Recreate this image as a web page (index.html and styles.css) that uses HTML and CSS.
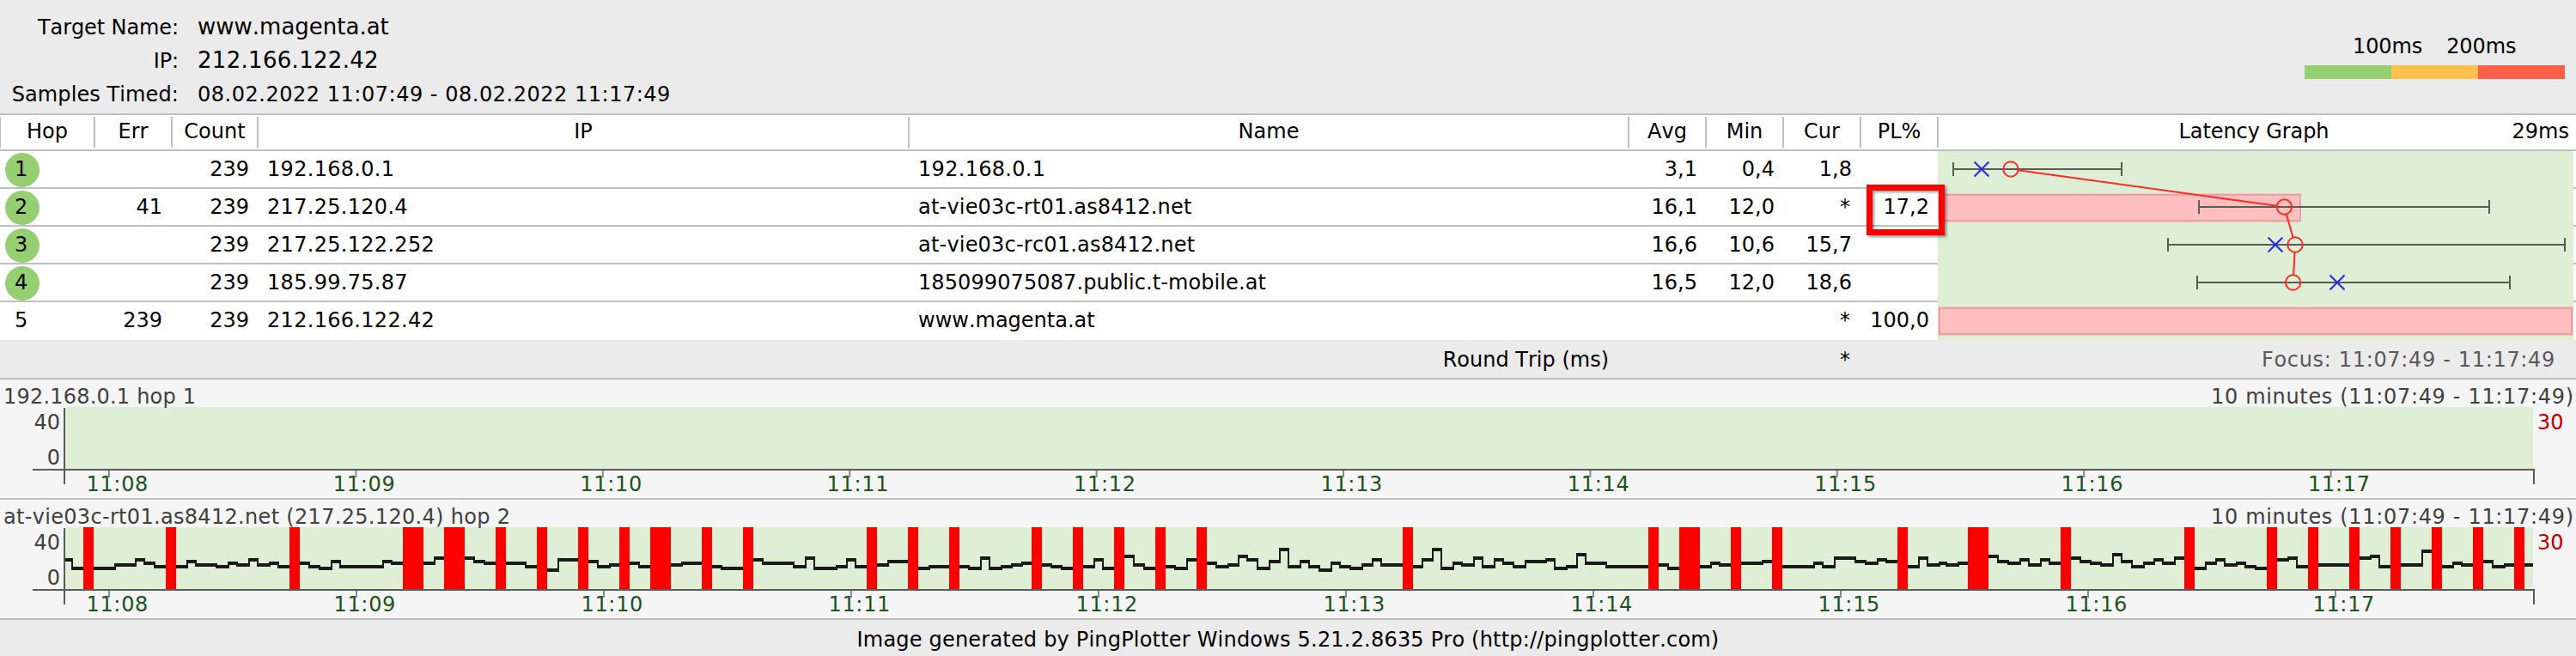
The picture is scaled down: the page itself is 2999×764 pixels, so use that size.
FILE: index.html
```html
<!DOCTYPE html>
<html lang="en">
<head>
<meta charset="utf-8">
<title>PingPlotter - www.magenta.at</title>
<link rel="stylesheet" href="styles.css">
</head>
<body>
<header class="summary">
  <dl class="info">
    <dt>Target Name:</dt><dd class="big">www.magenta.at</dd>
    <dt>IP:</dt><dd class="big ip">212.166.122.42</dd>
    <dt class="samples">Samples Timed:</dt><dd class="span">08.02.2022 11:07:49 - 08.02.2022 11:17:49</dd>
  </dl>
  <div class="legend">
    <div class="legend-labels"><span>100ms</span><span>200ms</span></div>
    <div class="legend-bar"><i class="good"></i><i class="warn"></i><i class="bad"></i></div>
  </div>
</header>

<main class="trace">
  <div class="row head">
    <span>Hop</span><span>Err</span><span>Count</span><span>IP</span><span>Name</span><span>Avg</span><span>Min</span><span>Cur</span><span>PL%</span>
    <span class="graph-head"><b>Latency Graph</b><em>29ms</em></span>
  </div>
  <div class="row"><span class="hop ok">1</span><span></span><span>239</span><span class="ip">192.168.0.1</span><span class="ip">192.168.0.1</span><span>3,1</span><span>0,4</span><span>1,8</span><span></span></div>
  <div class="row"><span class="hop ok">2</span><span>41</span><span>239</span><span class="ip">217.25.120.4</span><span class="host">at-vie03c-rt01.as8412.net</span><span>16,1</span><span>12,0</span><span class="star">*</span><span>17,2</span></div>
  <div class="row"><span class="hop ok">3</span><span></span><span>239</span><span class="ip">217.25.122.252</span><span class="host">at-vie03c-rc01.as8412.net</span><span>16,6</span><span>10,6</span><span>15,7</span><span></span></div>
  <div class="row"><span class="hop ok">4</span><span></span><span>239</span><span class="ip">185.99.75.87</span><span class="host-long">185099075087.public.t-mobile.at</span><span>16,5</span><span>12,0</span><span>18,6</span><span></span></div>
  <div class="row last"><span class="hop">5</span><span>239</span><span>239</span><span class="ip">212.166.122.42</span><span>www.magenta.at</span><span></span><span></span><span class="star">*</span><span>100,0</span></div>

  <svg class="latency" width="740" height="220" viewBox="2256 176 740 220">
    <rect class="plot" x="2256" y="176" width="740" height="220"/>
    <g class="loss">
      <rect x="2256" y="225" width="423" height="34"/><rect class="edge" x="2258" y="227" width="420" height="30"/>
      <rect x="2256" y="357" width="740" height="34"/><rect class="edge" x="2258" y="359" width="736" height="30"/>
    </g>
    <g class="whisker">
      <path d="M2274 197H2470M2274 189V205M2470 189V205"/>
      <path d="M2560 241H2898M2560 233V249M2898 233V249"/>
      <path d="M2524 285H2986M2524 277V293M2986 277V293"/>
      <path d="M2558 329H2922M2558 321V337M2922 321V337"/>
    </g>
    <g class="current">
      <path d="M2298.5 188.5l17 17m0-17l-17 17"/>
      <path d="M2640.5 276.5l17 17m0-17l-17 17"/>
      <path d="M2712.5 320.5l17 17m0-17l-17 17"/>
    </g>
    <g class="average">
      <circle cx="2341" cy="197" r="8.7"/><circle cx="2659.4" cy="241" r="8.7"/><circle cx="2672" cy="285" r="8.7"/><circle cx="2669.6" cy="329" r="8.7"/>
      <path d="M2349.6 198.2L2650.8 239.8M2661.8 249.4L2669.6 276.6M2671.5 293.7L2670.1 320.3"/>
    </g>
  </svg>
  <div class="highlight"></div>
</main>

<div class="round-trip"><span class="rt-label">Round Trip (ms)</span><span class="rt-value">*</span><span class="focus">Focus: 11:07:49 - 11:17:49</span></div>

<svg class="timeline" data-title="192.168.0.1 hop 1" data-step="287.4" data-title-width="224" width="2999" height="140"></svg>
<svg class="timeline" data-title="at-vie03c-rt01.as8412.net (217.25.120.4) hop 2" data-step="288" data-title-width="590" data-series="hop2" width="2999" height="140"></svg>

<footer class="credit">Image generated by PingPlotter Windows 5.21.2.8635 Pro (http://pingplotter.com)</footer>
<script src="timeline.js"></script>
</body>
</html>
```

FILE: styles.css
```css
* { box-sizing: border-box; }
body {
  margin: 0;
  width: 2999px;
  height: 764px;
  overflow: hidden;
  background: #ebebeb;
  color: #000;
  font: 24px/42px "DejaVu Sans", Verdana, sans-serif;
  font-kerning: none;
}

.summary {
  display: flex;
  justify-content: space-between;
  height: 134px;
  border-bottom: 2px solid #bfbfbf;
}
.info {
  display: grid;
  grid-template-columns: 208px auto;
  grid-template-rows: 39px 40px 40px;
  column-gap: 22px;
  align-items: baseline;
  margin: 0;
  padding-top: 11px;
  line-height: 40px;
}
.info dt { text-align: right; letter-spacing: -0.1px; }
.info .samples { letter-spacing: 0.1px; }
.info dd { margin: 0; }
.info .big { font-size: 26px; }
.info .span { letter-spacing: 0.52px; }
.ip { letter-spacing: 0.3px; }
.host { letter-spacing: 0.2px; }
.host-long { letter-spacing: 0.1px; }

.legend { width: 303px; margin-right: 13px; padding-top: 33px; }
.legend-labels { display: flex; gap: 28px; padding-left: 56px; height: 43px; line-height: 42px; letter-spacing: -0.1px; }
.legend-bar { display: flex; height: 16px; }
.legend-bar i { flex: 1; }
.good { background: #96cf72; }
.warn { background: #ffc14f; }
.bad { background: #ff604c; }

.trace { position: relative; background: #fff; height: 262px; }
.row {
  display: grid;
  grid-template-columns: 111px 90px 100px 758px 838px 90px 90px 90px 90px 742px;
  height: 44px;
  border-bottom: 2px solid #bfbfbf;
  text-align: right;
}
.row > span { padding: 0 11px 0 10px; white-space: nowrap; }
.row > span:nth-child(2) { padding-right: 12px; }
.row > span:nth-child(4), .row > span:nth-child(5) { text-align: left; }
.row > .star { padding-right: 13px; }
.row.last { border-bottom: 0; }
.row > .hop { padding-left: 17px; text-align: left; }
.row > .ok { background: radial-gradient(circle at 26px 22px, #96cf72 19.5px, transparent 20.3px); }

.row.head { height: 42px; padding: 2px 0; line-height: 34px; border-bottom-width: 2px; }
.row.head > span:nth-child(n) { height: 36px; padding: 0; text-align: center; border-right: 2px solid #bfbfbf; }
.row.head > span:first-child { border-left: 1px solid #bfbfbf; }
.row.head > .graph-head:nth-child(n) { display: grid; grid-template-columns: 75px 1fr 75px; border: 0; padding-right: 8px; }
.graph-head b { grid-column: 2; font-weight: normal; letter-spacing: -0.1px; }
.graph-head em { font-style: normal; text-align: right; }

.latency { position: absolute; left: 2256px; top: 42px; }
.plot { fill: #dfefd6; }
.loss rect { fill: #ffbfbf; }
.loss .edge { fill: none; stroke: #e1a6a6; stroke-width: 2; }
.whisker path { fill: none; stroke: #5a5a56; stroke-width: 2; }
.current path { fill: none; stroke: #2626f0; stroke-width: 2; }
.average circle, .average path { fill: none; stroke: #ff2a22; stroke-width: 2; }
.highlight {
  position: absolute;
  left: 2173px;
  top: 81px;
  width: 91px;
  height: 59px;
  border: 7px solid #f00;
  box-shadow: 2px 2px 3px rgba(0, 0, 0, 0.45), inset 2px 2px 3px rgba(0, 0, 0, 0.4);
}

.round-trip {
  display: grid;
  grid-template-columns: 1873px 281px 821px;
  height: 46px;
  line-height: 46px;
  border-bottom: 2px solid #bfbfbf;
  text-align: right;
}
.focus { color: #595959; letter-spacing: 0.67px; }

.timeline { display: block; background: #f5f5f5; border-bottom: 2px solid #bfbfbf; }
.timeline text { fill: #404040; }
.timeline .time { fill: #1c521c; }
.timeline .loss-max { fill: #c00000; }
.axis { fill: none; stroke: #5a5a5a; stroke-width: 2; }
.tick { fill: none; stroke: #8a8a8a; stroke-width: 2; }
.lost { fill: #f00; }
.level { fill: none; stroke: #1a1a1a; stroke-width: 4; }
.riser { fill: none; stroke: #1a1a1a; stroke-width: 2; }

.credit { height: 42px; text-align: center; line-height: 46px; letter-spacing: 0.2px; }
```

FILE: timeline.js
```js
// Timeline strips: latency steps as [x, y] pairs, lost packets as [x, width] pairs.
const series = {
  hop2: {
    steps: [[76,52],[84,62],[134,58],[158,52],[168,56],[180,60],[218,54],[228,58],[252,60],[266,56],[276,58],[290,52],[300,58],[314,56],[324,60],[343,56],[360,60],[372,62],[386,54],[396,60],[446,54],[456,56],[506,50],
      [552,54],[564,56],[612,60],[631,64],[650,52],[679,54],[696,60],[710,58],[727,56],[744,60],[770,58],[794,56],[823,60],[840,62],[871,52],[888,56],[924,60],[938,50],[948,62],[974,60],[986,52],[996,60],
      [1015,58],[1034,54],[1063,62],[1082,60],[1128,62],[1142,50],[1152,62],[1166,60],[1178,58],[1190,56],[1207,58],[1224,60],[1236,62],[1255,60],[1274,52],[1284,62],[1303,48],[1320,58],[1332,62],[1351,60],[1368,62],[1382,52],[1399,56],[1416,60],[1430,58],[1442,48],[1452,52],[1464,62],[1478,54],[1490,40],[1500,60],
      [1514,54],[1524,60],[1536,64],[1550,56],[1560,60],[1572,62],[1586,58],[1598,52],[1608,58],[1639,60],[1656,52],[1668,40],[1678,62],[1692,56],[1702,58],[1716,50],[1726,60],[1740,52],[1750,56],[1762,60],[1776,54],[1800,52],[1810,62],[1824,60],[1836,46],[1846,56],[1870,60],[1925,58],[1942,62],[1967,60],[1992,56],[2002,58],
      [2021,56],[2052,54],[2069,60],[2112,56],[2122,60],[2136,50],[2160,54],[2172,56],[2186,52],[2196,54],[2215,60],[2234,50],[2244,58],[2258,56],[2266,58],[2280,56],[2303,48],[2326,54],[2338,56],[2352,52],[2362,58],[2376,52],[2386,56],[2405,50],[2422,54],[2434,56],[2446,58],[2460,46],[2470,54],[2482,60],
      [2496,56],[2508,52],[2518,56],[2532,50],[2549,62],[2568,56],[2580,52],[2590,58],[2604,56],[2614,60],[2626,62],[2645,52],[2664,50],[2674,60],[2693,58],[2741,50],[2760,48],[2770,60],[2789,58],[2820,42],[2837,60],[2856,56],[2866,58],[2885,54],[2902,60],[2916,58]],
    lost: [[97,12],[193,12],[337,12],[469,24],[517,24],[577,12],[625,12],[673,12],[721,12],[757,24],[817,12],[865,12],[1009,12],[1057,12],[1105,12],[1201,12],[1249,12],[1297,12],[1345,12],[1393,12],[1633,12],[1919,12],[1955,24],[2015,12],[2063,12],[2209,12],[2291,24],[2399,12],[2543,12],[2639,12],[2687,12],[2735,12],[2783,12],[2831,12],[2879,12],[2927,12]]
  }
};
const TOP = 32, BOTTOM = 104, LEFT = 76, RIGHT = 2949;

for (const svg of document.querySelectorAll('.timeline')) {
  const { title, step, series: name, titleWidth } = svg.dataset;
  let out = `<rect class="plot" x="${LEFT}" y="${TOP}" width="${RIGHT - LEFT}" height="${BOTTOM - TOP}"/>`;
  if (name) {
    const { steps, lost } = series[name];
    let levels = '', risers = '';
    steps.forEach(([x, y], i) => {
      const next = i + 1 < steps.length ? steps[i + 1][0] + 1 : RIGHT;
      const yy = y + 18;
      levels += `M${i ? x - 1 : x} ${yy}H${next}`;
      if (i) risers += `M${x} ${steps[i - 1][1] + 18}V${yy}`;
    });
    out += `<path class="level" d="${levels}"/><path class="riser" d="${risers}"/>`;
    for (const [x, w] of lost) out += `<rect class="lost" x="${x}" y="${TOP}" width="${w}" height="${BOTTOM - TOP}"/>`;
  }
  out += `<path class="axis" d="M38 105H2951M75 33V122M2950 104V122"/>`;
  for (let i = 0; i < 10; i++) {
    const x = 127 + step * i;
    out += `<path class="tick" d="M${x} 106V114"/>`;
    out += `<text class="time" x="${x - 26.6}" y="130" textLength="72">11:${String(8 + i).padStart(2, '0')}</text>`;
  }
  out += `<text x="4" y="28" textLength="${titleWidth}">${title}</text>`;
  out += `<text x="2574" y="28" textLength="422">10 minutes (11:07:49 - 11:17:49)</text>`;
  out += `<text x="70" y="58" text-anchor="end">40</text><text x="70" y="99" text-anchor="end">0</text>`;
  out += `<text class="loss-max" x="2954" y="58">30</text>`;
  svg.innerHTML = out;
}
```
